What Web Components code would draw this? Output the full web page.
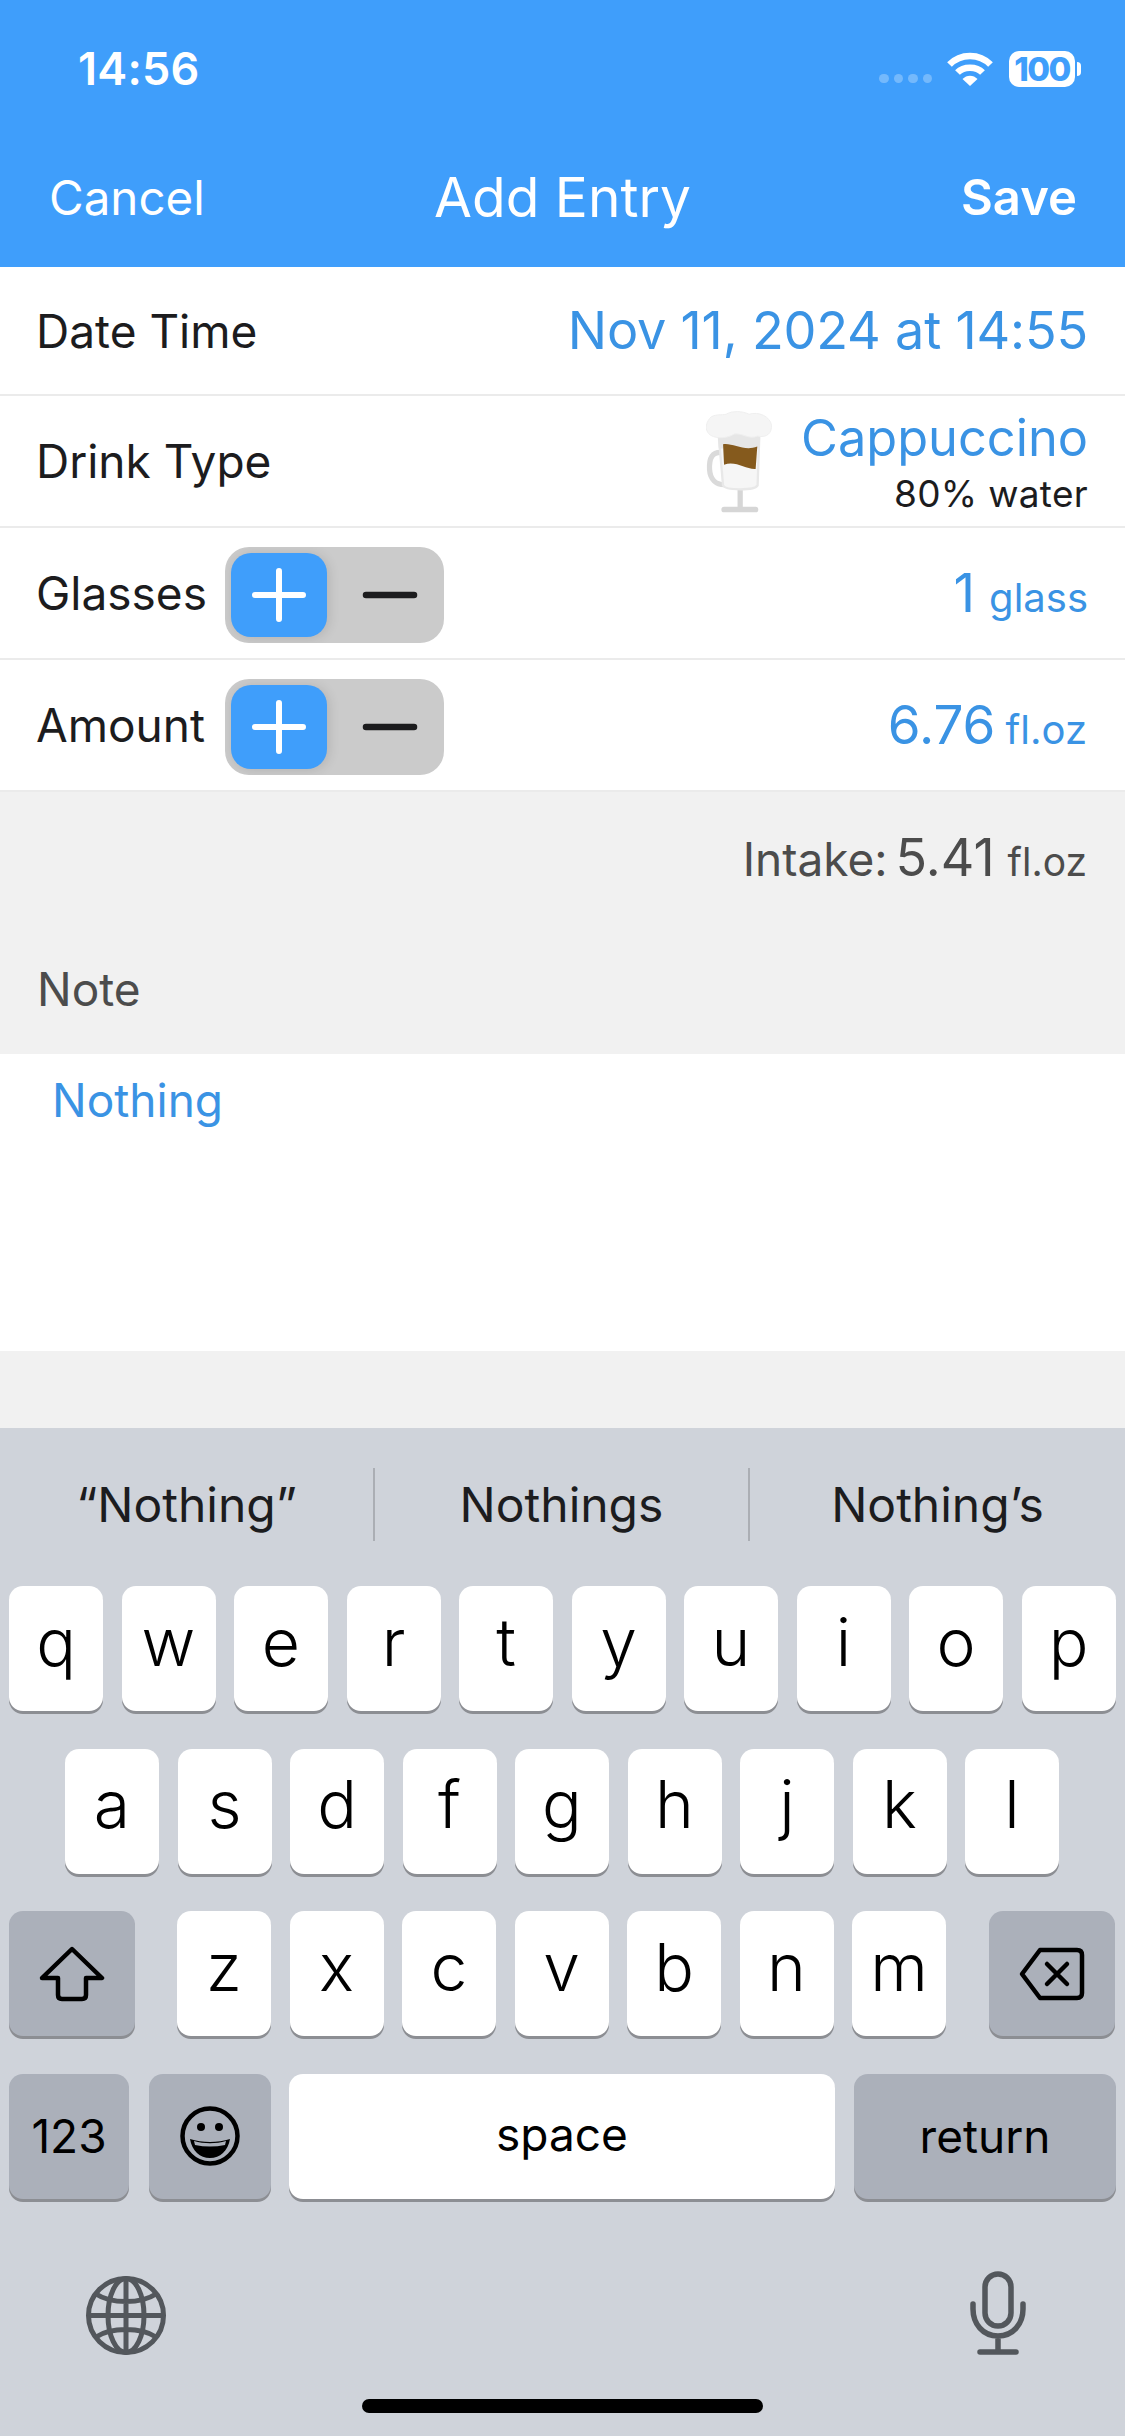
<!DOCTYPE html>
<html>
<head>
<meta charset="utf-8">
<title>Add Entry</title>
<style>
html,body{margin:0;padding:0;background:#f1f1f1;}
body{width:1125px;height:2436px;overflow:hidden;font-family:Inter,"Liberation Sans",sans-serif;}
app-screen{height:2436px;}
</style>
</head>
<body>
<app-screen>
  <status-bar></status-bar>
  <nav-bar></nav-bar>
  <form-row label="Date Time" style="height:129px"><span style="font-size:52.200px;color:#3a93e4;letter-spacing:-.2px;position:relative;top:-1px">Nov 11, 2024 at 14:55</span></form-row>
  <form-row label="Drink Type"><drink-value></drink-value></form-row>
  <form-row label="Glasses"><step-control slot="control"></step-control><unit-value num="1" unit="glass" style="--gap:14px"></unit-value></form-row>
  <form-row label="Amount"><step-control slot="control"></step-control><unit-value num="6.76" unit="fl.oz" style="margin-right:1px"></unit-value></form-row>
  <note-section></note-section>
  <key-board></key-board>
</app-screen>

<script>
function def(name, css, html, init) {
  customElements.define(name, class extends HTMLElement {
    connectedCallback() {
      if (this.shadowRoot) return;
      const root = this.attachShadow({mode: 'open'});
      const h = typeof html === 'function' ? html(this) : html;
      root.innerHTML = `<style>${css}</style>${h}`;
      if (init) init(this, root);
    }
  });
}

def('app-screen', `:host{display:flex;flex-direction:column;width:1125px;}`, `<slot></slot>`);

def('status-bar', `
  :host{display:flex;align-items:center;justify-content:space-between;height:135px;background:#3f9efb;color:#fff;box-sizing:border-box;padding:0 50px 0 78px;}
  .time{font-size:45px;font-weight:600;letter-spacing:.2px;margin-top:2px;}
  .right{display:flex;align-items:center;position:relative;top:1px;}
  .dots{display:flex;gap:5px;margin-right:15px;margin-top:20px;}
  .dots i{width:9.5px;height:9.5px;border-radius:50%;background:rgba(255,255,255,.28);}
  .batt{position:relative;margin-left:16px;width:66px;height:36px;background:#fff;border-radius:10px;color:#3f9efb;font-size:33px;font-weight:800;display:flex;align-items:center;justify-content:center;letter-spacing:-1.6px;}
  .batt::after{content:"";position:absolute;left:68px;top:11px;width:4px;height:14px;background:#fff;border-radius:0 7px 7px 0;}
`, `<span class="time">14:56</span>
  <div class="right">
    <div class="dots"><i></i><i></i><i></i><i></i></div>
    <svg width="46" height="34" viewBox="0 0 46 34"><g fill="none" stroke="#fff" stroke-width="6.5"><path d="M2.5 12.5C13.5 1 32.5 1 43.5 12.5"/><path d="M10.5 20.5C16.500 14 29.500 14 35.500 20.500"/></g><path d="M15.500 27C19.500 22.500 26.500 22.500 30.500 27L23 34Z" fill="#fff"/></svg>
    <div class="batt">100</div>
  </div>`);

def('nav-bar', `
  :host{display:flex;align-items:center;justify-content:space-between;height:132px;background:#3f9efb;color:#fff;box-sizing:border-box;padding:0 48px 8px 49px;position:relative;}
  span{font-size:47.500px;}
  .t{position:absolute;left:0;right:0;text-align:center;font-size:55px;top:29px;}
  .s{font-weight:600;font-size:49px;}
`, `<span>Cancel</span><span class="t">Add Entry</span><span class="s">Save</span>`);

def('form-row', `
  :host{display:flex;align-items:center;height:132px;box-sizing:border-box;background:#fff;border-bottom:2px solid #ebebeb;padding:0 37px;gap:18px;font-size:46px;color:#1c1c1e;}
  .l{flex:none;width:170px;white-space:nowrap;margin-left:-1px;margin-right:1px;}
  .v{margin-left:auto;display:flex;align-items:center;}
`, el => `<span class="l">${el.getAttribute('label')}</span><slot name="control"></slot><div class="v"><slot></slot></div>`);

def('step-control', `
  :host{display:block;position:relative;width:219px;height:96px;margin-top:3px;background:#cbcbcb;border-radius:24px;overflow:hidden;}
  .p{position:absolute;left:6px;top:6px;width:96px;height:84px;background:#3f9efb;border-radius:20px;box-shadow:2px 1px 12px rgba(0,0,0,.12);}
  svg{position:absolute;left:0;top:0;}
`, `<div class="p"></div><svg width="219" height="96" viewBox="0 0 219 96"><path d="M54 24V72M30 48H78" stroke="#fff" stroke-width="6" stroke-linecap="round"/><path d="M141 48H189" stroke="#1c1c1e" stroke-width="6.500" stroke-linecap="round"/></svg>`);

def('unit-value', `
  :host{display:inline-flex;align-items:baseline;gap:var(--gap,10px);color:#3a93e4;}
  b{font-weight:400;font-size:53px;}
  span{font-size:40px;}
`, el => `<b>${el.getAttribute('num')}</b><span>${el.getAttribute('unit')}</span>`);

def('drink-value', `
  :host{display:flex;align-items:center;gap:27px;}
  .tx{display:flex;flex-direction:column;align-items:flex-end;}
  .n{font-size:50.500px;color:#3a93e4;line-height:62px;position:relative;top:1px;}
  .w{font-size:37px;color:#1c1c1e;line-height:44px;margin-top:4px;letter-spacing:.3px;}
  svg{margin-top:2px;}
`, `<svg width="68" height="102" viewBox="190 62 205 310">
    <rect x="285" y="300" width="16" height="60" fill="#d6d6d6"/>
    <rect x="236" y="353" width="112" height="17" rx="8" fill="#d6d6d6"/>
    <path d="M240 188C208 184 198 205 200 240C202 270 220 286 245 286" fill="none" stroke="#dadada" stroke-width="16"/>
    <path d="M226 115H352L346 288C338 304 248 304 241 288Z" fill="#f6f6f6" stroke="#e8e8e8" stroke-width="7"/>
    <path d="M224 125H354L351 176H228Z" fill="#e6e6e6"/>
    <path d="M241 163C270 158 305 186 345 170L340 238C310 240 280 212 244 225Z" fill="#855a1d"/>
    <path d="M200 85C210 70 240 75 250 72C270 60 300 62 320 72C350 62 385 80 388 105C390 128 375 145 345 138C320 150 300 128 275 132C250 148 195 150 190 115C189 100 195 92 200 85Z" fill="#f5f5f5" stroke="#efefef" stroke-width="3"/>
  </svg>
  <div class="tx"><span class="n">Cappuccino</span><span class="w">80% water</span></div>`);

def('note-section', `
  :host{display:flex;flex-direction:column;height:636px;background:#f1f1f1;}
  .i{display:flex;justify-content:flex-end;align-items:baseline;gap:8px;height:130px;box-sizing:border-box;padding:34px 38px 0 0;color:#4c4c4c;font-size:46px;}
  .i b{font-weight:400;font-size:52px;}
  .i span.u{font-size:39px;margin-left:5px;}
  .l{height:132px;box-sizing:border-box;padding-top:39px;padding-left:37px;font-size:46px;color:#4c4c4c;}
  .box{height:297px;background:#fff;box-sizing:border-box;padding:18px 52px;font-size:46px;color:#3a93e4;}
`, `<div class="i"><span>Intake:</span><b>5.41</b><span class="u">fl.oz</span></div>
  <div class="l">Note</div>
  <div class="box">Nothing</div>`);

def('kb-key', `
  :host{display:flex;align-items:center;justify-content:center;height:125px;box-sizing:border-box;background:#fff;border-radius:14px;box-shadow:0 3px 0 #8c8e93;color:#000;font-size:66px;font-weight:300;flex:none;}
  :host([dark]){background:#abb0ba;}
  :host([small]){font-size:46px;font-weight:400;}
  ::slotted(svg){display:block;}
`, `<slot></slot>`);

const letters = keys => keys.split('').map(k => `<kb-key style="width:94px"><span style="position:relative;top:-7px">${k}</span></kb-key>`).join('');

def('key-board', `
  :host{display:flex;flex-direction:column;height:1008px;background:#cfd3da;position:relative;}
  .sug{display:grid;grid-template-columns:373px 375px 377px;height:158px;box-sizing:border-box;padding-top:40px;}
  .sug div{height:73px;display:flex;align-items:center;justify-content:center;font-size:48px;color:#1c1c1e;border-left:2px solid #abaeb4;box-sizing:border-box;}
  .sug div:first-child{border-left:0;}
  .row{display:flex;gap:18.500px;margin-bottom:37.500px;}
  .sys{display:flex;justify-content:space-between;padding:0 99px 0 86px;margin-top:72px;align-items:flex-end;}
  .home{position:absolute;left:362px;bottom:23px;width:401px;height:14px;border-radius:7px;background:#000;}
`, `<div class="sug"><div>“Nothing”</div><div>Nothings</div><div>Nothing’s</div></div>
  <div class="row" style="padding:0 9px">${letters('qwertyuiop')}</div>
  <div class="row" style="padding:0 65px">${letters('asdfghjkl')}</div>
  <div class="row" style="padding:0 9px">
    <kb-key dark style="width:126px;margin-right:23.500px"><svg width="66" height="56" viewBox="0 0 66 56"><path d="M33 3L63 32H47V49Q47 53 43 53H23Q19 53 19 49V32H3Z" fill="none" stroke="#000" stroke-width="4.500" stroke-linejoin="round"/></svg></kb-key>
    ${letters('zxcvbnm')}
    <kb-key dark style="width:126px;margin-left:24.500px"><svg width="66" height="54" viewBox="0 0 66 54"><path d="M21 3H58Q63 3 63 8V46Q63 51 58 51H21L3 27Z" fill="none" stroke="#000" stroke-width="4.500" stroke-linejoin="round"/><path d="M28 17L48 37M48 17L28 37" stroke="#000" stroke-width="4.500" stroke-linecap="round"/></svg></kb-key>
  </div>
  <div class="row" style="padding:0 9px;gap:18px;margin-bottom:0">
    <kb-key dark small style="width:120px;margin-right:2px">123</kb-key>
    <kb-key dark style="width:122px"><svg width="60" height="60" viewBox="0 0 60 60"><circle cx="30" cy="30" r="27.500" fill="none" stroke="#000" stroke-width="4.500"/><circle cx="21" cy="21" r="4" fill="#000"/><circle cx="39" cy="21" r="4" fill="#000"/><path d="M10 33C22 37 38 37 50 33C48 45 40 52 30 52C20 52 12 45 10 33Z" fill="#000"/><path d="M14 35C24 38 36 38 46 35L45 39C35 41 25 41 15 39Z" fill="#abb0ba"/></svg></kb-key>
    <kb-key small style="width:546px"><span style="position:relative;top:-2px">space</span></kb-key>
    <kb-key dark small style="width:262px;margin-left:1px">return</kb-key>
  </div>
  <div class="sys">
    <svg width="80" height="79" viewBox="0 0 80 79" fill="none" stroke="#53575c" stroke-width="5"><ellipse cx="40" cy="39.500" rx="37.500" ry="37"/><ellipse cx="40" cy="39.500" rx="18" ry="37"/><path d="M40 3V76M3 39.500H77M10 18C25 28 55 28 70 18M10 61C25 51 55 51 70 61"/></svg>
    <svg width="56" height="84" viewBox="0 0 56 84" fill="none" stroke="#53575c" stroke-width="5.500" stroke-linecap="round"><rect x="15" y="3" width="26" height="52" rx="13"/><path d="M3 33V38C3 53 13 65 28 65C43 65 53 53 53 38V33M28 65V81M10 81H46"/></svg>
  </div>
  <div class="home"></div>`);
</script>
</body>
</html>
